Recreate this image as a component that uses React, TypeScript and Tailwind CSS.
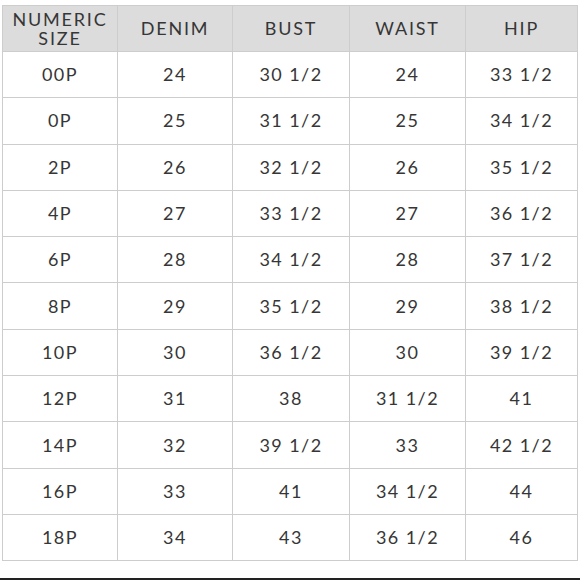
const headers = ["NUMERIC\nSIZE", "DENIM", "BUST", "WAIST", "HIP"];

const rows = [
  ["00P", "24", "30 1/2", "24", "33 1/2"],
  ["0P", "25", "31 1/2", "25", "34 1/2"],
  ["2P", "26", "32 1/2", "26", "35 1/2"],
  ["4P", "27", "33 1/2", "27", "36 1/2"],
  ["6P", "28", "34 1/2", "28", "37 1/2"],
  ["8P", "29", "35 1/2", "29", "38 1/2"],
  ["10P", "30", "36 1/2", "30", "39 1/2"],
  ["12P", "31", "38", "31 1/2", "41"],
  ["14P", "32", "39 1/2", "33", "42 1/2"],
  ["16P", "33", "41", "34 1/2", "44"],
  ["18P", "34", "43", "36 1/2", "46"],
];

export default function App() {
  return (
    <main className="flex h-[580px] w-[580px] flex-col bg-white font-['Lato',sans-serif] text-[#363636]">
      <div className="px-[2px] pt-[5px]">
        <div className="grid grid-cols-[114px_114px_116px_115px_111px] gap-px border border-[#cdcdcd] bg-[#cdcdcd]">
          {headers.map((h) => (
            <div
              key={h}
              className="flex h-[45px] items-center justify-center whitespace-pre-line bg-[#dcdcdc] text-center text-[18px] leading-[19px] tracking-[0.1em]"
            >
              {h}
            </div>
          ))}
          {rows.map((r) =>
            r.map((c, i) => (
              <div
                key={r[0] + i}
                className="flex h-[45.3px] items-center justify-center bg-white text-[18px] tracking-[0.08em]"
              >
                {c}
              </div>
            ))
          )}
        </div>
      </div>
      <div className="mt-auto h-[2px] bg-[#222]" />
    </main>
  );
}
